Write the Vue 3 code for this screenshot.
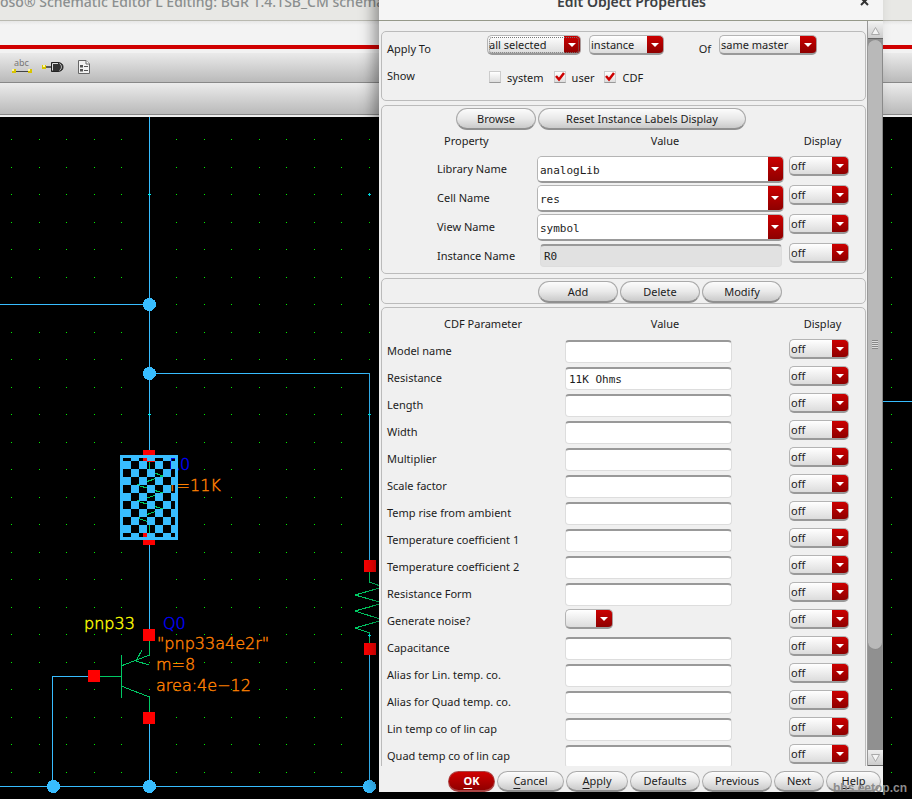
<script setup>
import { ref } from 'vue'

const pitch = 27.5
const dots = []
for (let row = 0; row < 25; row++) {
  for (let col = 0; col < 60; col++) {
    dots.push({ x: Math.round(11 + col * pitch), y: Math.round(139 + row * pitch) })
  }
}

const nodes = [[149, 304], [149, 373], [53, 786], [149, 786], [369, 786]]
const pins = [[143, 450], [143, 533], [143, 629], [143, 712], [88, 670], [364, 560], [364, 643]]
const marks = [[149, 194], [369, 194], [149, 414], [369, 414], [369, 635]]

const filters = ref([
  { id: 'system', label: 'system', on: false },
  { id: 'user', label: 'user', on: true },
  { id: 'cdf', label: 'CDF', on: true }
])

const properties = ref([
  { id: 'lib', label: 'Library Name', value: 'analogLib' },
  { id: 'cell', label: 'Cell Name', value: 'res' },
  { id: 'view', label: 'View Name', value: 'symbol' },
  { id: 'inst', label: 'Instance Name', value: 'R0', fixed: true }
])

const params = ref([
  { label: 'Model name', value: '' },
  { label: 'Resistance', value: '11K Ohms' },
  { label: 'Length', value: '' },
  { label: 'Width', value: '' },
  { label: 'Multiplier', value: '' },
  { label: 'Scale factor', value: '' },
  { label: 'Temp rise from ambient', value: '' },
  { label: 'Temperature coefficient 1', value: '' },
  { label: 'Temperature coefficient 2', value: '' },
  { label: 'Resistance Form', value: '' },
  { label: 'Generate noise?', value: '', choice: true },
  { label: 'Capacitance', value: '' },
  { label: 'Alias for Lin. temp. co.', value: '' },
  { label: 'Alias for Quad temp. co.', value: '' },
  { label: 'Lin temp co of lin cap', value: '' },
  { label: 'Quad temp co of lin cap', value: '' }
])

const thumb = ref(86)
</script>

<template>
  <div class="desktop">
    <div class="editor">
      <div class="editor-title">oso® Schematic Editor L Editing: BGR 1.4.1SB_CM schematic</div>
      <div class="menubar"></div>
      <div class="toolbar">
        <button class="tool" aria-label="Wire name">
          <svg width="22" height="18" viewBox="0 0 22 18">
            <text x="3" y="8" font-size="9" fill="#777">abc</text>
            <path d="M4 13.500H18" stroke="#444" />
            <rect x="1" y="11" width="4" height="4" fill="#d8c400" />
            <rect x="17" y="11" width="4" height="4" fill="#d8c400" />
            <rect x="1" y="11" width="2" height="2" fill="#fff9a0" />
            <rect x="17" y="11" width="2" height="2" fill="#fff9a0" />
          </svg>
        </button>
        <button class="tool" aria-label="Pin">
          <svg width="22" height="18" viewBox="0 0 22 18">
            <path d="M4 9H10" stroke="#333" stroke-width="1.500" />
            <path d="M9.500 4.500H16Q21 5 21 9T16 13.500H9.500Z" fill="#333" stroke="#222" />
            <path d="M10.500 12.500V5.500H16" fill="none" stroke="#ddd" />
            <path d="M17.500 5.500Q19.500 7 19.500 9T17.500 12.500" fill="none" stroke="#bbb" />
            <rect x="0" y="7" width="4" height="4" fill="#d8c400" />
            <rect x="1" y="7" width="2" height="2" fill="#fff9a0" />
          </svg>
        </button>
        <button class="tool" aria-label="Properties">
          <svg width="22" height="18" viewBox="0 0 22 18">
            <path d="M5.500 2.500H13L16.500 6V15.500H5.500Z" fill="#f2f2f2" stroke="#666" />
            <path d="M13 2.500V6H16.500" fill="#fff" stroke="#666" />
            <path d="M7 7H10V9.500H7ZM7 11H10V13.500H7Z" fill="#555" />
            <path d="M11 8.500H15M11 12.500H15" stroke="#555" />
          </svg>
        </button>
      </div>
      <div class="toolbar empty"></div>
      <svg class="canvas" shape-rendering="crispEdges">
        <defs>
          <pattern id="checker" x="123" y="453" width="16" height="16" patternUnits="userSpaceOnUse">
            <rect x="8" y="0" width="8" height="8" fill="#38bdff" />
            <rect x="0" y="8" width="8" height="8" fill="#38bdff" />
          </pattern>
        </defs>
        <g transform="translate(0 -117)">
          <rect v-for="(d, i) in dots" :key="i" :x="d.x" :y="d.y" width="1" height="1" fill="#00f000" />
          <g class="wire">
            <path d="M149.500 117V450M149.500 545V629M149.500 724V786M0 304.500H149M149 373.500H369.500V560M369.500 655V786" />
            <path d="M88 676.500H52.500V786M0 786.500H369M883 401.500H2000" />
          </g>
          <g class="symbol">
            <path d="M149.500 462V471L163 476L137 485L163 493L137 501L163 509L137 518L149.500 522V540" />
            <path d="M369.500 572V582L383 587L355 595L383 603L355 611L383 620L355 628L369.500 633V643" />
            <path d="M121.500 655V698M100 676.500H121M121 666L149.500 655V641M142 650L136 661L149 665M121 686L149.500 697V712" />
          </g>
          <rect v-for="(p, i) in pins" :key="i" :x="p[0]" :y="p[1]" width="12" height="12" fill="#f00" />
          <circle v-for="(n, i) in nodes" :key="i" :cx="n[0] + 0.5" :cy="n[1] + 0.5" r="6.500" fill="#38bdff" />
          <path v-for="(m, i) in marks" :key="i" :d="`M${m[0] - 1} ${m[1] + 0.5}h3M${m[0] + 0.5} ${m[1] - 1}v3`" stroke="#00e8f0" />
          <g class="note">
            <text class="yellow" x="84" y="629">pnp33</text>
            <text class="blue" x="163" y="629">Q0</text>
            <text class="blue" x="169" y="470">R0</text>
            <text class="orange" x="170" y="491">r=11K</text>
            <text class="orange" x="157" y="649">"pnp33a4e2r"</text>
            <text class="orange" x="156" y="670">m=8</text>
            <text class="orange" x="156" y="691">area:4e−12</text>
          </g>
          <rect x="123" y="458" width="52" height="79" fill="url(#checker)" />
          <rect x="121.500" y="456.500" width="55" height="82" fill="none" stroke="#38bdff" stroke-width="3" />
        </g>
      </svg>
    </div>

    <form class="dialog" @submit.prevent>
      <div class="dialog-title">
        <h1>Edit Object Properties</h1>
        <button type="button" class="close" aria-label="Close">
          <svg width="9" height="9" viewBox="0 0 9 9"><path d="M1 1L8 8M8 1L1 8" stroke="#333" stroke-width="2" /></svg>
        </button>
      </div>
      <div class="body">
        <div class="panels">
          <section class="panel scope">
            <label class="caption" for="applyTo">Apply To</label>
            <div class="line">
              <span class="combo selected"><select id="applyTo"><option>all selected</option></select></span>
              <span class="combo kind"><select aria-label="Object type"><option>instance</option></select></span>
              <label class="of" for="of">Of</label>
              <span class="combo master"><select id="of"><option>same master</option></select></span>
            </div>
            <span class="caption">Show</span>
            <div class="line checks">
              <label v-for="f in filters" :key="f.id" class="check">
                <input type="checkbox" v-model="f.on">
                <svg v-if="f.on" width="12" height="12" viewBox="0 0 12 12"><path d="M2 5L5 8.500L10 2" fill="none" stroke="#c00" stroke-width="2.500" /></svg>
                {{ f.label }}
              </label>
            </div>
          </section>

          <section class="panel props">
            <div class="actions top">
              <button type="button" class="btn w80">Browse</button>
              <button type="button" class="btn wide">Reset Instance Labels Display</button>
            </div>
            <div class="head"><span>Property</span><span>Value</span><span>Display</span></div>
            <div v-for="p in properties" :key="p.id" class="prop">
              <label :for="p.id">{{ p.label }}</label>
              <input v-if="p.fixed" :id="p.id" class="fixed" readonly v-model="p.value">
              <span v-else class="edit">
                <input :id="p.id" v-model="p.value">
                <button type="button" :aria-label="'Choose ' + p.label"></button>
              </span>
              <span class="combo"><select :aria-label="p.label + ' display'"><option>off</option></select></span>
            </div>
          </section>

          <section class="panel">
            <div class="actions">
              <button type="button" class="btn w80">Add</button>
              <button type="button" class="btn w80">Delete</button>
              <button type="button" class="btn w80">Modify</button>
            </div>
          </section>

          <section class="panel cdf">
            <div class="head"><span>CDF Parameter</span><span>Value</span><span>Display</span></div>
            <div v-for="(p, i) in params" :key="p.label" class="param">
              <label :for="'param' + i">{{ p.label }}</label>
              <span v-if="p.choice" class="combo small"><select :id="'param' + i"><option></option></select></span>
              <input v-else :id="'param' + i" class="field" v-model="p.value">
              <span class="combo"><select :aria-label="p.label + ' display'"><option>off</option></select></span>
            </div>
          </section>
        </div>
        <div class="scrollbar">
          <button type="button" aria-label="Scroll up">
            <svg width="11" height="10" viewBox="0 0 11 10"><path d="M1.500 8.500L5.500 1.500L9.500 8.500Z" fill="#f4f4f4" stroke="#aaa" /></svg>
          </button>
          <div class="track"><div class="thumb" :style="{ height: thumb + '%' }"><i></i></div></div>
          <button type="button" aria-label="Scroll down">
            <svg width="11" height="10" viewBox="0 0 11 10"><path d="M1.500 1.500L5.500 8.500L9.500 1.500Z" fill="#f4f4f4" stroke="#aaa" /></svg>
          </button>
        </div>
      </div>
      <div class="footer">
        <button class="btn ok"><u>O</u>K</button>
        <button type="button" class="btn cancel"><u>C</u>ancel</button>
        <button type="button" class="btn apply"><u>A</u>pply</button>
        <button type="button" class="btn long">Defaults</button>
        <button type="button" class="btn long">Previous</button>
        <button type="button" class="btn next">Next</button>
        <button type="button" class="btn help"><u>H</u>elp</button>
      </div>
    </form>
    <div class="watermark">bbs.eetop.cn</div>
  </div>
</template>

<style>
body {
  margin: 0;
  background: #000;
}
</style>

<style scoped>
* {
  box-sizing: border-box;
}
.desktop {
  position: relative;
  height: 100vh;
  overflow: hidden;
  font: 11px/16px "Noto Sans", sans-serif;
  color: #1c1c1c;
}
button, input, select {
  font: inherit;
  color: inherit;
  margin: 0;
  padding: 0;
  border: 0;
}
.editor {
  display: flex;
  flex-direction: column;
  height: 100%;
}
.editor-title {
  height: 21px;
  flex: none;
  overflow: hidden;
  background: #e8e8e5;
  border-bottom: 1px solid #b9b9b0;
  color: #8b8f8f;
  font-size: 14px;
  font-weight: 500;
  line-height: 4px;
  white-space: nowrap;
}
.menubar {
  height: 28px;
  flex: none;
  background: linear-gradient(#e6e6e6, #f3f3f3 4px);
  border-bottom: 4px solid #d00000;
}
.toolbar {
  display: flex;
  align-items: center;
  gap: 9px;
  height: 34px;
  flex: none;
  padding: 3px 0 0 11px;
  background: linear-gradient(#f2f2f2 4px, #eaeaea 4px, #bababa);
  border-bottom: 1px solid #888;
}
.empty {
  height: 32px;
  background: linear-gradient(#ececec, #b9b9b9);
}
.tool {
  display: flex;
  background: none;
}
.canvas {
  display: block;
  flex: 1;
  width: 100%;
  min-height: 0;
  border-top: 2px solid #eee;
  background: #000;
}
.wire {
  fill: none;
  stroke: #38bdff;
}
.symbol {
  fill: none;
  stroke: #00c864;
}
.note {
  font: 200 16px "DejaVu Sans", sans-serif;
  stroke-width: 0.4px;
}
.yellow {
  fill: #ff0;
  stroke: #ff0;
}
.blue {
  fill: #00f;
  stroke: #00f;
}
.orange {
  fill: #ff8000;
  stroke: #ff8000;
}
.dialog {
  position: absolute;
  top: -17px;
  bottom: 7px;
  left: 379px;
  right: 29px;
  display: flex;
  flex-direction: column;
  background: #f0f0f0;
  box-shadow: -7px 0 14px -2px rgba(0, 0, 0, 0.4);
}
.dialog-title {
  display: flex;
  flex: none;
  height: 38px;
  align-items: center;
  padding: 0 14px 0 24px;
  background: #f5f5f5;
  border-bottom: 1px solid #96998a;
}
h1 {
  flex: 1;
  margin: 0;
  text-align: center;
  font-size: 14px;
  font-weight: 600;
  color: #3c4043;
}
.close {
  display: flex;
  background: none;
}
.body {
  display: flex;
  flex: 1;
  min-height: 0;
}
.panels {
  display: flex;
  flex: 1;
  flex-direction: column;
  gap: 4px;
  padding: 10px 1px 0 2px;
  overflow: hidden;
}
.panel {
  flex: none;
  padding-top: 2px;
  border: 1px solid #bbb;
  border-radius: 5px;
}
.scope {
  display: grid;
  grid-template-columns: 100px 1fr;
  align-items: start;
  row-gap: 5px;
  padding: 3px 0 14px 5px;
}
.scope .caption {
  padding-top: 6px;
}
.line {
  display: flex;
  gap: 8px;
}
.of {
  margin-left: auto;
  padding-top: 6px;
}
.master {
  margin-right: 48px;
}
.checks {
  gap: 10px;
  padding: 8px 0 0 2px;
}
.check {
  display: flex;
  position: relative;
  gap: 6px;
}
.check input {
  appearance: none;
  width: 12px;
  height: 12px;
  margin-top: 1px;
  border: 1px solid #ccc;
  border-bottom-color: #999;
  background: linear-gradient(#fff, #ddd);
}
.check svg {
  position: absolute;
  left: 0;
  top: 1px;
  pointer-events: none;
}
.combo {
  position: relative;
  display: block;
  width: 60px;
  height: 20px;
}
.combo select {
  appearance: none;
  display: block;
  width: 100%;
  height: 100%;
  padding: 0 18px 0 1px;
  border: 1px solid #b4b4b4;
  border-bottom: 2px solid #999;
  border-right-color: #a99;
  border-radius: 5px;
  background: linear-gradient(#cc0000, #8e0000) right / 16px 100% no-repeat, linear-gradient(#fff, #dcdcdc);
}
.combo::after, .edit button::after {
  content: "";
  position: absolute;
  right: 5px;
  top: 8px;
  border: 4px solid transparent;
  border-top-color: #fff;
  border-bottom: 0;
  pointer-events: none;
}
.combo.selected {
  width: 94px;
}
.selected select {
  outline: 1px dotted #777;
  outline-offset: -3px;
}
.combo.kind {
  width: 75px;
}
.combo.master {
  width: 98px;
}
.combo.small {
  width: 48px;
}
.actions {
  display: flex;
  gap: 2px;
  padding-left: 156px;
}
.top {
  padding-left: 74px;
}
.btn {
  height: 22px;
  border: 1px solid #aaa;
  border-bottom: 2px solid #909090;
  border-radius: 11px;
  background: linear-gradient(#fcfcfc, #e9e9e9 50%, #cacaca);
}
.w80 {
  width: 80px;
}
.wide {
  width: 208px;
}
.props {
  padding-bottom: 1px;
}
.head, .prop {
  display: grid;
  grid-template-columns: 155px 1fr 60px;
  padding-right: 16px;
}
.head {
  height: 26px;
  padding-top: 3px;
}
.head span:first-child {
  padding-left: 62px;
}
.head span:nth-child(2) {
  text-align: center;
  padding-left: 4px;
}
.head span:nth-child(3) {
  text-align: center;
  padding-left: 7px;
}
.prop {
  height: 29px;
}
.prop label {
  padding: 5px 0 0 55px;
}
.edit {
  position: relative;
  display: flex;
  height: 27px;
  margin-right: 5px;
  border: 1px solid #b4b4b4;
  border-bottom: 2px solid #999;
  border-radius: 5px;
  overflow: hidden;
}
.edit input {
  flex: 1;
  min-width: 0;
  padding: 3px 0 0 2px;
}
.edit button {
  width: 15px;
  background: linear-gradient(#cc0000, #8e0000);
}
.edit button::after {
  top: 10px;
  right: 4px;
}
.edit input, .fixed, .field {
  font-family: "DejaVu Sans Mono", monospace;
}
.fixed, .field {
  height: 23px;
  margin-top: 1px;
  padding-left: 3px;
  border: 1px solid #ddd;
  border-top: 2px solid #999;
  border-radius: 4px;
  background: #fff;
}
.fixed {
  margin: 1px 7px 0 3px;
  background: #e1e1e1;
}
.cdf {
  margin-top: -1px;
}
.cdf .head {
  height: 29px;
  padding-top: 6px;
}
.param {
  display: grid;
  grid-template-columns: 178px 1fr 60px;
  height: 27px;
  padding: 0 16px 0 5px;
}
.param label {
  padding-top: 4px;
}
.field {
  margin-right: 57px;
}
.scrollbar {
  display: flex;
  flex-direction: column;
  width: 16px;
  padding-top: 2px;
  border-left: 1px solid #999;
}
.scrollbar button {
  display: flex;
  align-items: center;
  justify-content: center;
  height: 16px;
  flex: none;
  background: linear-gradient(#eee, #ccc);
  border-bottom: 1px solid #666;
}
.track {
  flex: 1;
  background: #909090;
}
.thumb {
  display: flex;
  align-items: center;
  justify-content: center;
  background: #b9b9b9;
  border: 1px solid #8a8a8a;
  border-width: 1px 1px 1px 0;
  border-radius: 8px;
}
.thumb i {
  width: 6px;
  height: 9px;
  background: repeating-linear-gradient(#888 0 1px, #ddd 1px 2px);
}
.footer {
  display: flex;
  flex: none;
  justify-content: flex-end;
  gap: 2px;
  height: 26px;
  padding: 5px 2px 0 0;
}
.footer .btn {
  height: 21px;
}
.footer u {
  text-underline-offset: 3px;
}
.ok {
  width: 47px;
}
.dialog .ok {
  background: linear-gradient(#d00000, #900000);
  border-color: #a44;
  color: #fff;
  font-weight: 700;
}
.cancel {
  width: 67px;
}
.apply {
  width: 62px;
}
.long {
  width: 70px;
}
.next {
  width: 50px;
}
.help {
  width: 55px;
}
.watermark {
  position: absolute;
  right: 5px;
  bottom: 3px;
  font: bold 12px/16px "Liberation Sans Narrow", "Liberation Sans", sans-serif;
  color: #8c8c8c;
}
</style>
